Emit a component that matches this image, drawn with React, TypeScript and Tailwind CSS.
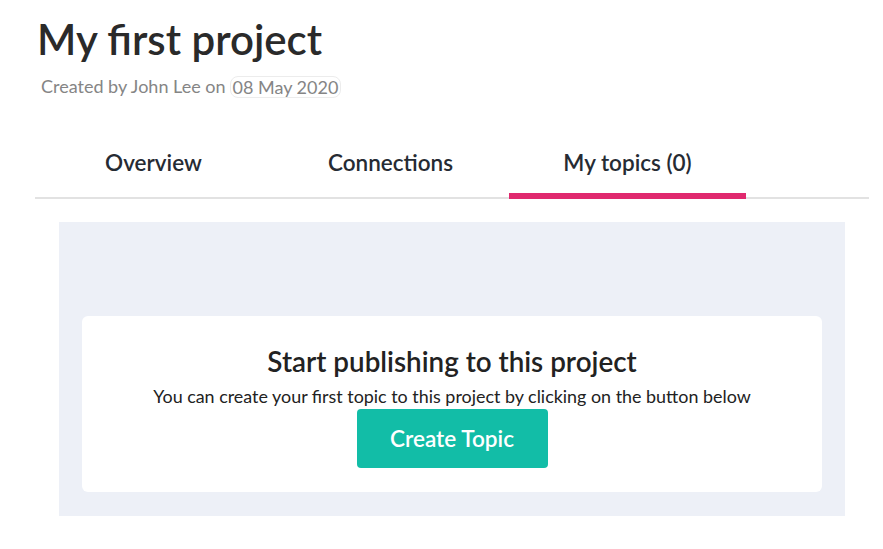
import { useState } from 'react';

const tabs = ['Overview', 'Connections', 'My topics (0)'];

export default function App() {
  const [active, setActive] = useState(2);

  return (
    <div className="w-[883px] h-[549px] bg-white font-['Lato',sans-serif] text-[#2b2b2b]">
      <div className="pt-[12px] pl-[37px]">
        <h1 className="text-[42px] font-semibold leading-[54px] text-[#2a2a2a]">My first project</h1>
        <p className="mt-[7px] ml-[4px] flex items-center text-[18px] text-[#858585]">
          Created by John Lee on
          <span className="ml-[4px] rounded-[8px] border border-[#ececec] px-[2px] leading-[20px]">08 May 2020</span>
        </p>
      </div>

      <nav className="mx-[35px] mt-[35px] flex border-b-2 border-[#e2e2e2] w-[834px]">
        {tabs.map((t, i) => (
          <button
            key={t}
            onClick={() => setActive(i)}
            className={
              'w-[237px] h-[64px] -mb-[2px] pb-[2px] text-[22.5px] font-semibold text-[#262b33] border-b-[6px] ' +
              (active === i ? 'border-[#e0296e]' : 'border-transparent')
            }
          >
            {t}
          </button>
        ))}
      </nav>

      <section className="ml-[59px] mt-[23px] w-[786px] h-[294px] bg-[#edf0f7] px-[23px] pt-[94px]">
        <div className="h-[176px] rounded-[6px] bg-white flex flex-col items-center pt-[29px]">
          <h2 className="text-[27.8px] font-semibold leading-[34px] text-[#222]">Start publishing to this project</h2>
          <p className="mt-[5px] text-[17.9px] leading-[24px] text-[#222]">
            You can create your first topic to this project by clicking on the button below
          </p>
          <button className="mt-[1px] w-[191px] h-[59px] rounded-[4px] bg-[#12bda7] text-white text-[22.6px] font-semibold">
            Create Topic
          </button>
        </div>
      </section>
    </div>
  );
}
